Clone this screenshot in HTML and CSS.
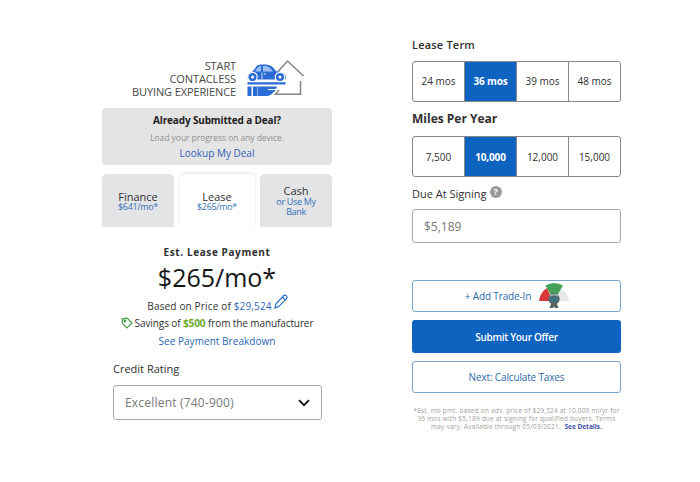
FILE: index.html
```
<!DOCTYPE html>
<html lang="en">
<head>
    <meta charset="utf-8">
    <title>Build Your Deal</title>
    <link rel="stylesheet" href="styles.css">
</head>
<body>

    <div class="page">

        <div class="summary">
            <div class="brand">
                <div class="brand-text">START<br>CONTACLESS<br>BUYING EXPERIENCE</div>
                <svg class="brand-logo" width="60" height="40" viewBox="0 0 60 40">
                    <!-- house -->
                    <path d="M31 12.500 L40.500 2 L56.500 17" fill="none" stroke="#858585" stroke-width="1.500"/>
                    <path d="M53.500 22 V35.200 H28.500 L32 31" fill="none" stroke="#858585" stroke-width="1.500"/>
                    <!-- car -->
                    <path d="M.5 19.500 Q.5 13.500 5.500 12.500 L9 8 Q10 5.500 14 5.500 H19 Q25 5.500 29 12.300 Q36 12.500 38 15.500 Q39.500 18 38.500 20.500 H1 Z" fill="#2a6bd6"/>
                    <path d="M8 12.500 L10.500 8.500 Q11.500 7 14 7 V12.500 Z M16 7 H19 Q22.500 7.500 26 12.500 H16 Z" fill="#9dbff3"/>
                    <path d="M15 13.500 V20.500 M17 15 H19" stroke="#fff" stroke-width=".8"/>
                    <circle cx="5.500" cy="18" r="4.700" fill="#2a6bd6" stroke="#fff" stroke-width="1.200"/>
                    <circle cx="5.500" cy="18" r="1.500" fill="#fff"/>
                    <circle cx="33" cy="18" r="4.700" fill="#2a6bd6" stroke="#fff" stroke-width="1.200"/>
                    <circle cx="33" cy="18" r="1.500" fill="#fff"/>
                    <!-- hand -->
                    <path d="M.5 23.300 H38.500 V25.500 H.5 Z" fill="#2a6bd6"/>
                    <path d="M.5 27.500 H4.500 V37 H.5 Z M6 27.500 H29.500 Q30.500 29.300 28 30 H21 V31 H29 L24 35.500 Q22 37 19 37 H6 Z" fill="#2a6bd6"/>
                    <path d="M10.500 28 V37" stroke="#bcd3f6" stroke-width=".7"/>
                </svg>
            </div>

            <div class="saved-deal">
                <div class="saved-title">Already Submitted a Deal?</div>
                <div class="saved-note">Load your progress on any device.</div>
                <div class="saved-link">Lookup My Deal</div>
            </div>

            <div class="tabs">
                <div class="tab">
                    <span class="tab-name">Finance</span>
                    <span class="tab-price">$641/mo*</span>
                </div>
                <div class="tab active">
                    <span class="tab-name">Lease</span>
                    <span class="tab-price">$265/mo*</span>
                </div>
                <div class="tab cash">
                    <span class="tab-name">Cash</span>
                    <span class="tab-price">or Use My<br>Bank</span>
                </div>
            </div>

            <div class="payment">
                <div class="payment-label">Est. Lease Payment</div>
                <div class="payment-amount">$265/mo*</div>
                <div class="based-on">
                    <span>Based on Price of <span class="blue">$29,524</span></span>
                    <svg class="pencil" width="14" height="15" viewBox="0 0 14 15" fill="none" stroke="#2b6fc0" stroke-width="1.200">
                        <path d="M1 14 L2 9.800 L9.500 1.800 Q11 .6 12.300 1.800 Q13.600 3.200 12.400 4.700 L4.800 12.600 Z M8.500 3 L11.200 5.800"/>
                    </svg>
                </div>
                <div class="savings">
                    <svg width="12" height="12" viewBox="0 0 12 12" fill="none" stroke="#3d9b45" stroke-width="1.200">
                        <path d="M1.200 1.800 L6.200 1.200 L10.900 6.100 L6 10.900 L1.500 6.300 Z"/>
                        <circle cx="3.900" cy="4" r=".8"/>
                    </svg>
                    <span>Savings of <b>$500</b> from the manufacturer</span>
                </div>
                <div class="breakdown">See Payment Breakdown</div>
            </div>

            <div class="credit">
                <div class="credit-label">Credit Rating</div>
                <div class="select">
                    <span>Excellent (740-900)</span>
                    <svg width="12" height="8" viewBox="0 0 12 8" fill="none" stroke="#111" stroke-width="1.700">
                        <path d="M1 1.200 L6 6.200 L11 1.200"/>
                    </svg>
                </div>
            </div>
        </div>

        <div class="terms">
            <div class="term-label">Lease Term</div>
            <div class="options">
                <div class="option">24 mos</div>
                <div class="option selected">36 mos</div>
                <div class="option">39 mos</div>
                <div class="option">48 mos</div>
            </div>

            <div class="miles-label">Miles Per Year</div>
            <div class="options miles">
                <div class="option">7,500</div>
                <div class="option selected">10,000</div>
                <div class="option">12,000</div>
                <div class="option">15,000</div>
            </div>

            <div class="due-label">Due At Signing <span class="help">?</span></div>
            <div class="due-input">$5,189</div>

            <div class="button trade">
                <span>+ Add Trade-In</span>
                <svg width="32" height="28" viewBox="0 0 32 28">
                    <path d="M1 19 Q2 10 9 6 L15 19 Z" fill="#d9393b"/>
                    <path d="M23 7 Q30 11 31 19 H17 Z" fill="#e6e9e8"/>
                    <path d="M7.500 3.500 Q16 -1.500 25 3.500 L19.500 13 H13 Z" fill="#45a158"/>
                    <circle cx="16" cy="17" r="5.700" fill="#50676b"/>
                    <path d="M12 14 Q16 11.500 20 14" fill="none" stroke="#a4b4ad" stroke-width="1.500"/>
                    <path d="M12 17.500 H20" stroke="#2b7d98" stroke-width="2"/>
                    <path d="M13 22 H19 L20.500 26 H17 L16 24.500 L15 26 H11.500 Z" fill="#596260"/>
                </svg>
            </div>
            <div class="button submit">Submit Your Offer</div>
            <div class="button next">Next: Calculate Taxes</div>

            <div class="fine-print">
                <div>*Est. mo pmt. based on adv. price of $29,524 at 10,000 mi/yr for</div>
                <div>36 mos with $5,189 due at signing for qualified buyers. Terms</div>
                <div>may vary. Available through 05/03/2021. &nbsp;<b>See Details.</b></div>
            </div>
        </div>

    </div>

</body>
</html>
```

FILE: styles.css
```
* {
    box-sizing: border-box;
}
body {
    margin: 0;
    background-color: #fff;
    color: #303030;
    font-family: "Open Sans", sans-serif;
    font-size: 10px;
}
svg {
    display: block;
    flex-shrink: 0;
}
.page {
    display: flex;
    height: 482px;
    padding-left: 102px;
    white-space: nowrap;
}
.summary {
    width: 230px;
    padding-top: 59px;
    margin-right: 80px;
}
.terms {
    width: 209px;
    padding-top: 37px;
}
.blue {
    color: #2f67bd;
}

/* header */
.brand {
    display: flex;
    height: 49px;
    padding-left: 20px;
}
.brand-text {
    width: 114px;
    margin-right: 11px;
    text-align: right;
    font-size: 11px;
    letter-spacing: -0.12px;
    line-height: 13px;
    color: #484848;
}
.saved-deal {
    height: 57px;
    padding-top: 4px;
    border-radius: 4px;
    background-color: #e4e4e4;
    text-align: center;
}
.saved-title {
    font-size: 10px;
    font-weight: 700;
    letter-spacing: -0.15px;
    line-height: 17px;
    color: #222;
}
.saved-note {
    font-size: 8.5px;
    letter-spacing: -0.05px;
    line-height: 17px;
    color: #909090;
}
.saved-link {
    font-size: 10px;
    font-weight: 500;
    line-height: 14px;
    color: #3560b8;
}

/* tabs */
.tabs {
    display: flex;
    justify-content: space-between;
    margin-top: 9px;
}
.tab {
    width: 72px;
    height: 53px;
    padding-top: 16px;
    border-radius: 5px 5px 0 0;
    background-color: #e3e4e6;
    text-align: center;
}
.tab.active {
    width: 75px;
    background-color: #fff;
    box-shadow: 0 -1px 3px #e2e2e2;
}
.tab.cash {
    padding-top: 10px;
}
.tab-name {
    display: block;
    font-size: 11px;
    font-weight: 500;
    line-height: 13px;
}
.tab-price {
    display: block;
    font-size: 9px;
    font-weight: 500;
    letter-spacing: -0.33px;
    line-height: 10px;
    color: #3372b8;
}
.tab:not(.cash) .tab-price {
    margin-top: -1px;
}

/* payment */
.payment {
    padding-top: 17px;
    text-align: center;
}
.payment-label {
    font-size: 10px;
    font-weight: 700;
    letter-spacing: 0.6px;
    line-height: 17px;
}
.payment-amount {
    font-size: 25px;
    font-weight: 500;
    line-height: 32px;
    color: #151515;
}
.based-on {
    display: flex;
    justify-content: center;
    gap: 2px;
    height: 22px;
    padding-left: 1px;
    letter-spacing: 0.16px;
    line-height: 27px;
}
.pencil {
    margin-top: 1px;
}
.savings {
    display: flex;
    align-items: center;
    justify-content: center;
    gap: 2px;
    height: 16px;
    letter-spacing: -0.1px;
}
.savings b {
    color: #69a929;
}
.breakdown {
    font-weight: 500;
    letter-spacing: 0.05px;
    line-height: 21px;
    color: #2c66b4;
}
.credit {
    width: 209px;
    margin: 9px 0 0 11px;
}
.credit-label {
    font-size: 11px;
    line-height: 16px;
}
.select {
    display: flex;
    align-items: center;
    justify-content: space-between;
    height: 35px;
    margin-top: 8px;
    padding: 0 11px;
    border: 1px solid #aaa;
    border-radius: 3px;
    font-size: 12px;
    letter-spacing: 0.2px;
    color: #777;
}

/* right column */
.term-label {
    font-size: 11px;
    font-weight: 600;
    letter-spacing: 0.2px;
    line-height: 16px;
}
.options {
    display: flex;
    height: 41px;
    margin-top: 8px;
    border: 1px solid #888;
    border-radius: 3px;
}
.option {
    flex: 1;
    border-left: 1px solid #888;
    text-align: center;
    line-height: 38px;
}
.option:first-child {
    border-left: none;
}
.option.selected {
    background-color: #0e62c0;
    color: #fff;
    font-weight: 700;
    letter-spacing: -0.15px;
}
.miles-label {
    margin-top: 9px;
    font-size: 12px;
    font-weight: 700;
    line-height: 16px;
}
.options.miles {
    height: 41px;
    margin-top: 9px;
}
.options.miles .option {
    line-height: 40px;
}
.due-label {
    display: flex;
    align-items: center;
    gap: 3px;
    height: 16px;
    margin-top: 8px;
    font-size: 11px;
}
.help {
    width: 12px;
    height: 12px;
    margin-top: -3px;
    border-radius: 50%;
    background-color: #999;
    color: #fff;
    font-size: 9px;
    font-weight: 700;
    line-height: 12px;
    text-align: center;
}
.due-input {
    height: 34px;
    margin-top: 8px;
    padding-left: 11px;
    border: 1px solid #aaa;
    border-radius: 3px;
    font-size: 12px;
    line-height: 33px;
    color: #777;
}
.button {
    display: flex;
    align-items: center;
    justify-content: center;
    height: 32px;
    border: 1px solid #79a5cc;
    border-radius: 3px;
    color: #2b69ab;
    font-weight: 500;
    letter-spacing: -0.15px;
}
.trade {
    gap: 7px;
    margin-top: 37px;
    padding-left: 2px;
}
.submit {
    height: 33px;
    margin-top: 8px;
    border: none;
    background-color: #0e62c0;
    color: #fff;
    font-weight: 600;
    letter-spacing: -0.3px;
}
.next {
    margin-top: 8px;
}
.fine-print {
    margin-top: 14px;
    text-align: center;
    font-size: 6.5px;
    letter-spacing: 0.2px;
    line-height: 7.8px;
    color: #a0a0a0;
}
.fine-print b {
    letter-spacing: 0;
    color: #4450a8;
}
```
